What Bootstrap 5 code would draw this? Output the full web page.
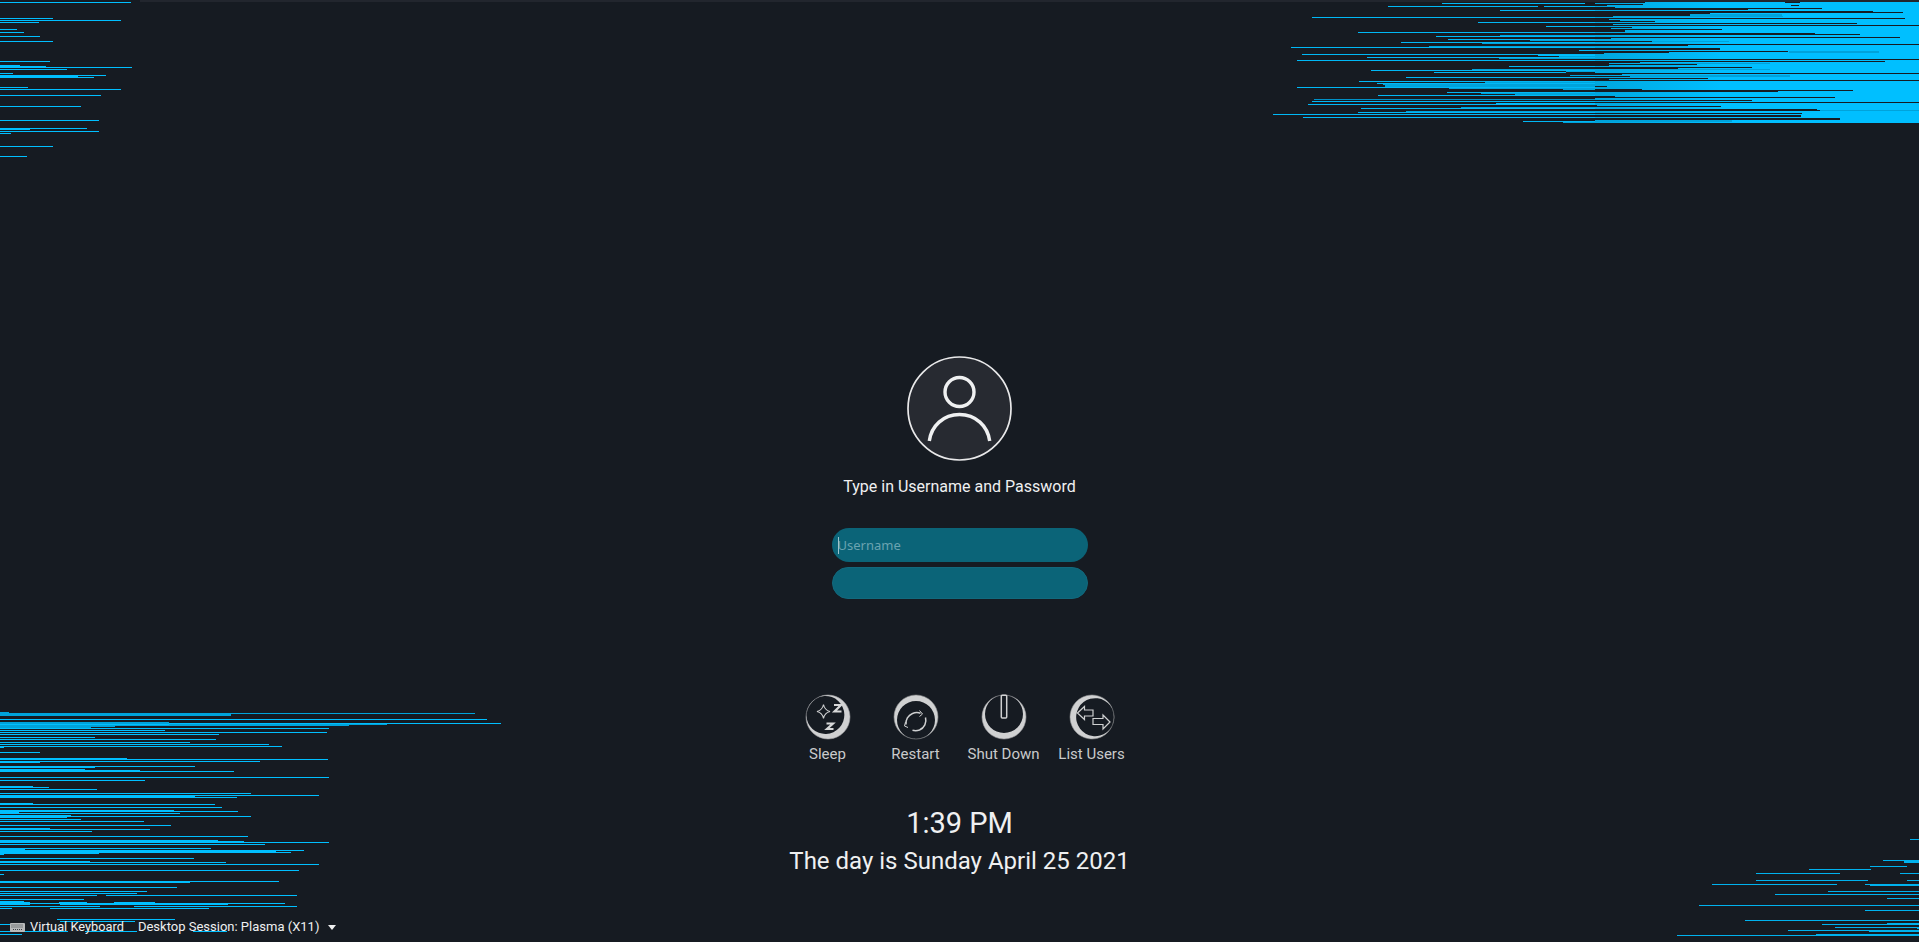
<!DOCTYPE html>
<html lang="en">
<head>
<meta charset="utf-8">
<title>Login</title>
<link href="https://cdn.jsdelivr.net/npm/bootstrap@5.3.0/dist/css/bootstrap.min.css" rel="stylesheet">
<style>
html,body{height:100%;margin:0;background:#161b22;overflow:hidden}
body{font-family:Roboto,"Liberation Sans",sans-serif;color:#eff0f1}
.stage{height:942px;position:relative;overflow:hidden;background:#161b22}
.streaks{position:absolute;left:0;top:0;width:1919px;height:942px}
.login-col{position:relative;padding-top:356px}
.avatar-ic{display:block;width:105px;height:105px}
.prompt{font-size:16px;line-height:24px;margin-top:14px;margin-bottom:29px}
.field-wrap{position:relative;width:256px}
.pill{display:block;width:256px;border:0;border-radius:17px;background:#0b6478;color:#eff0f1;padding:0 6px;outline:0;box-shadow:none;font-family:"Noto Sans",sans-serif;font-size:13px}
.pill::placeholder{color:#6aa3b0;opacity:1}
.pill-a{height:34px}
.pill-b{height:32px;margin-top:5px;border:1px solid #12697d}
.caret-mark{position:absolute;left:6px;top:9px;width:1px;height:17px;background:#9fc3cc}
.power-row{margin-top:95px;width:352px}
.power-item{width:88px;color:#c9cacb;font-size:15px;line-height:20px}
.power-item svg{display:block;width:46px;height:46px;margin-bottom:4px}
.clock{font-size:29px;line-height:36px;margin-top:41px}
.date-line{font-size:24px;line-height:30px;margin-top:5px}
.bottom-bar{position:absolute;left:10px;bottom:5px;font-size:12.8px;line-height:20px;color:#eff0f1}
.kbd-ic{width:15px;height:9px;margin-right:5px}
.drop-tri{width:0;height:0;border-left:4.5px solid transparent;border-right:4.5px solid transparent;border-top:5px solid #eff0f1;margin-left:9px}
.sess{margin-left:14px;font-size:13px}
</style>
</head>
<body>
<div class="stage">
<svg class="streaks" viewBox="0 0 1919 942" shape-rendering="crispEdges" fill="none" aria-hidden="true">
<defs><linearGradient id="blockFill" x1="1595" x2="1720" y1="0" y2="0" gradientUnits="userSpaceOnUse"><stop offset="0" stop-color="#00a6de"/><stop offset="1" stop-color="#00bfff"/></linearGradient></defs>
<rect x="140" y="0" width="1779" height="2" fill="#22262e"/>
<rect x="1595" y="2" width="324" height="121" fill="url(#blockFill)"/>
<g transform="translate(0 .5)">
<path stroke="#161b22" d="M1595 2h50M1785 2h15M1595 4h48M1791 5h8M1595 5h12M1595 7h20M1595 8h227M1595 9h153M1595 11h278M1595 12h308M1595 13h115M1595 14h95M1595 15h95M1595 16h18M1595 18h310M1595 19h14M1595 20h25M1595 21h60M1595 23h262M1595 24h18M1595 25h324M1595 27h37M1595 28h16M1595 29h127M1595 30h30M1595 31h30M1595 33h220M1595 34h265M1595 37h305M1595 38h16M1595 41h57M1595 44h324M1595 45h93M1595 48h125M1595 49h125M1595 51h193M1595 52h74M1595 53h9M1595 59h324M1595 61h290M1595 62h45M1595 63h14M1595 64h102M1595 65h14M1595 67h157M1595 68h83M1595 73h324M1595 74h27M1595 76h35M1595 78h113M1595 79h14M1595 80h324M1595 86h12M1595 89h47M1595 90h258M1595 91h183M1595 96h20M1595 97h240M1595 100h157M1595 102h324M1595 105h2M1595 106h126M1595 109h222M1595 110h225M1595 113h207M1595 115h206M1595 116h206M1595 118h245M1595 119h245"/>
<path stroke="#00a3db" d="M1690 14h92M1690 15h92M1613 16h170M1652 41h77M1789 51h90M1789 52h90M1630 75h160M1630 76h160M1640 63h130M1650 69h120M1820 110h99M1595 120h137M1595 121h137"/>
<path stroke="#00b8f6" d="M1442 3h143M1388 6h150M1544 6h51M1500 10h95M1312 17h283M1478 22h117M1546 26h49M1358 32h237M1436 36h159M1448 39h147M1401 42h194M1291 47h304M1579 50h16M1302 54h293M1367 57h228M1297 60h298M1509 66h86M1371 70h224M1434 72h132M1406 77h189M1359 81h236M1377 83h218M1297 87h298M1447 92h148M1378 95h217M1312 101h283M1308 104h287M1361 108h234M1358 112h237M1273 114h322M1303 117h292M1523 121h72"/>
<path stroke="#0090c6" d="M1314 99h281"/>
<path stroke="#00a3db" d="M1500 35h95M1530 40h65M1482 43h113M1429 46h166M1559 56h36M1499 58h96M1472 69h123M1566 71h29M1570 75h25M1485 82h110M1383 84h212M1385 85h210M1385 86h210M1449 88h146M1563 89h32M1481 93h114M1515 94h80M1461 107h134M1406 111h189M1563 122h32"/>
<path stroke="#00bfff" d="M1538 55h57M1496 103h99"/>
<!-- top left -->
<path stroke="#00bfff" d="M0 2h131M0 18h53M0 20h121M0 22h39M0 29h17M0 32h24M0 36h40M0 41h53M0 61h50M0 65h20M0 66h46M0 67h132M0 69h67M0 73h13M0 75h106M0 76h78M0 77h94M0 87h28M0 89h121M0 95h101M0 106h81M0 120h99M0 128h87M0 129h30M0 131h99M0 133h11M0 146h53M0 156h27"/>
<!-- bottom left -->
<path stroke="#00a3db" d="M0 712h9M0 713h475M0 714h231M0 715h231M0 722h169M0 723h169M169 724h218M0 725h349M0 726h115M0 727h91"/>
<path stroke="#00bfff" d="M0 719h487M169 723h332M0 724h169M0 728h329M0 730h165M0 732h327M0 734h219M0 737h95M0 739h216M0 742h190M0 744h269M0 746h282M0 747h4M0 752h40M0 758h127M0 759h328M0 761h260M0 762h40M0 766h195M0 767h95M0 769h85M0 770h140M0 771h234M0 777h329M0 780h145M0 786h33M0 787h49M0 789h97M0 793h251M0 795h319M0 796h195M0 797h237M0 803h33M0 804h215M0 807h222M0 810h174M0 811h238M0 812h19M0 813h180M0 815h71M0 816h251M0 817h67M0 819h81M0 821h144M0 825h171M0 828h50M0 829h150M0 831h92M0 836h248M0 840h218M0 841h244M0 842h329M0 844h265M0 848h211M0 849h25M0 850h304M0 851h276M0 852h291M0 853h99M0 854h4M0 858h194M0 861h90M0 862h226M0 864h319M0 870h299M0 874h4M0 881h279M0 882h190M0 887h177M0 891h147M0 893h137M0 895h97M106 895h191M0 899h84M0 901h24M0 902h30M59 902h28M114 902h41M0 903h285M60 904h168M0 904h30M0 906h100M134 906h163M0 908h12M50 908h159M57 919h118M60 921h75M0 924h10M0 931h68M85 931h52M193 931h34M0 934h22"/>
<!-- bottom right -->
<path stroke="#00b2ee" d="M1910 839h9M1883 860h36M1904 861h15M1904 862h15M1870 866h37M1809 869h62M1756 873h84M1900 873h19M1756 880h112M1907 880h12M1712 884h125M1865 884h54M1870 885h49M1828 891h91M1775 894h144M1887 898h32M1699 905h220M1865 910h54M1745 920h174M1887 923h32M1822 924h97M1835 927h84M1917 928h2M1788 930h131M1869 931h50M1677 935h242M1816 934h103"/>
</g>
</svg>

<div class="login-col d-flex flex-column align-items-center">
  <svg class="avatar-ic" viewBox="0 0 105 105" fill="none" role="img" aria-label="User">
    <circle cx="52.500" cy="52.500" r="51.500" fill="#272a31" stroke="#e9e9ea" stroke-width="1.700"/>
    <circle cx="52.500" cy="36" r="14.500" stroke="#eff0f1" stroke-width="3.400"/>
    <path d="M22.300 85c2-15 14-26.500 30.200-26.500S80.700 70 82.700 85" stroke="#eff0f1" stroke-width="3.400"/>
  </svg>
  <div class="prompt">Type in Username and Password</div>
  <div class="field-wrap">
    <input class="pill pill-a" type="text" placeholder="Username" aria-label="Username">
    <span class="caret-mark"></span>
    <input class="pill pill-b" type="password" aria-label="Password">
  </div>
  <div class="power-row d-flex">
    <div class="power-item d-flex flex-column align-items-center">
      <svg viewBox="-23 -23 46 46" fill="none">
        <path fill="#d0d1d2" fill-rule="evenodd" d="M-22 0a22 22 0 1 0 44 0a22 22 0 1 0-44 0ZM-22.200-1a19 19 0 1 0 38 0a19 19 0 1 0-38 0Z" transform="rotate(20)"/>
        <circle r="22" stroke="#9a9b9d" stroke-width=".6"/>
        <path d="M-4.500-12.500c.8 4 2.500 6 6.500 7-4 .8-5.700 3-6.500 7-.8-4-2.800-6.200-6.500-7 3.700-1 5.700-3 6.500-7Z" stroke="#cfd0d1" stroke-width="1.100"/>
        <path d="M6-12h7l-6.500 6.500h7M-1.500 6.500h6.500l-6 5.500h6.500" stroke="#d6d7d8" stroke-width="2.200"/>
      </svg>
      Sleep
    </div>
    <div class="power-item d-flex flex-column align-items-center">
      <svg viewBox="-23 -23 46 46" fill="none">
        <path fill="#d0d1d2" fill-rule="evenodd" d="M-22 0a22 22 0 1 0 44 0a22 22 0 1 0-44 0ZM-19 3a19 19 0 1 0 38 0a19 19 0 1 0-38 0Z"/>
        <circle r="22" stroke="#8d8e90" stroke-width=".6"/>
        <path d="M-10 7.500A10.500 10.500 0 0 1-3.500-3.500a11 11 0 0 1 8-.3M9.500.5A10.500 10.500 0 0 1 3.500 13a11 11 0 0 1-7 .3" stroke="#cfd0d1" stroke-width="1.500"/>
        <path d="M3.500-6.500 6.500-3 3.500-.5M-10.500 5l-1 4 3.500 1.500" stroke="#cfd0d1" stroke-width="1"/>
      </svg>
      Restart
    </div>
    <div class="power-item d-flex flex-column align-items-center">
      <svg viewBox="-23 -23 46 46" fill="none">
        <path fill="#d0d1d2" fill-rule="evenodd" d="M-22 0a22 22 0 1 0 44 0a22 22 0 1 0-44 0ZM-19-3a19 19 0 1 0 38 0a19 19 0 1 0-38 0Z"/>
        <circle r="22" stroke="#9a9b9d" stroke-width=".6"/>
        <rect x="-2.700" y="-21.800" width="5.400" height="22.800" rx="1" fill="#161b22" stroke="#cfd0d1" stroke-width="1.500"/>
      </svg>
      Shut Down
    </div>
    <div class="power-item d-flex flex-column align-items-center">
      <svg viewBox="-23 -23 46 46" fill="none">
        <path fill="#d0d1d2" fill-rule="evenodd" d="M-22 0a22 22 0 1 0 44 0a22 22 0 1 0-44 0ZM-16 1a19 19 0 1 0 38 0a19 19 0 1 0-38 0Z" transform="rotate(-15)"/>
        <circle r="22" stroke="#8d8e90" stroke-width=".6"/>
        <path d="M-14.500-4-7.500-10.500V-7H1V-1H-7.500V2.500Z" stroke="#cfd0d1" stroke-width="1.200"/>
        <path d="M18 5 11-2V1.500H1V7.500H11V12Z" fill="#161b22" stroke="#cfd0d1" stroke-width="1.200"/>
      </svg>
      List Users
    </div>
  </div>
  <div class="clock">1:39 PM</div>
  <div class="date-line">The day is Sunday April 25 2021</div>
</div>

<div class="bottom-bar d-flex align-items-center">
  <svg class="kbd-ic" viewBox="0 0 15 9" aria-hidden="true"><rect width="15" height="9" rx="1" fill="#b9babb"/><path d="M1.500 2h12M1.500 4h12M3 6.500h9" stroke="#3a3d42" stroke-width="1" stroke-dasharray="1 1"/></svg>
  <span>Virtual Keyboard</span>
  <span class="sess">Desktop Session: Plasma (X11)</span>
  <span class="drop-tri"></span>
</div>
</div>
<script src="https://cdn.jsdelivr.net/npm/bootstrap@5.3.0/dist/js/bootstrap.bundle.min.js"></script>
</body>
</html>
